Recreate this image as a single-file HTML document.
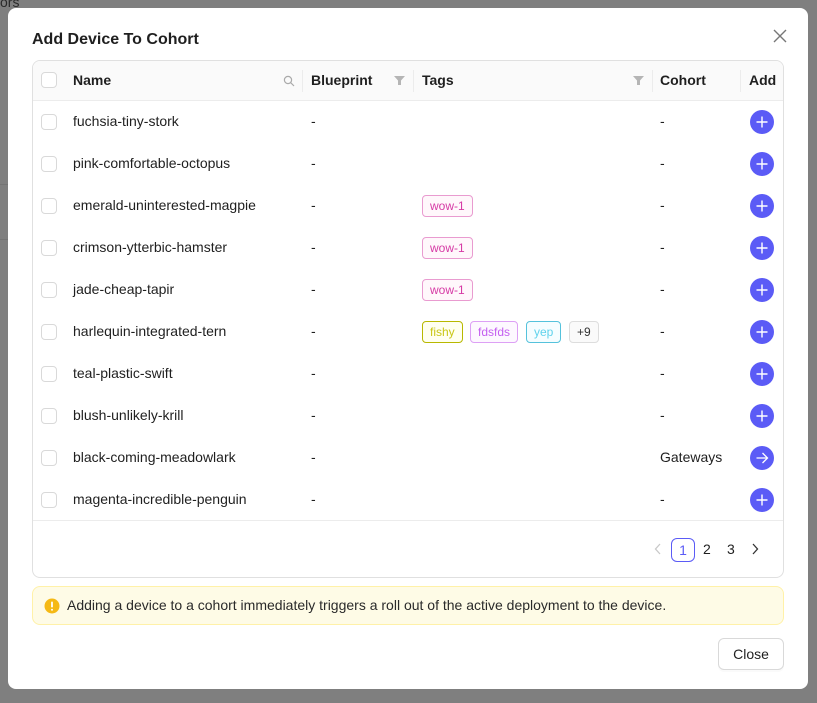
<!DOCTYPE html>
<html><head><meta charset="utf-8"><style>
*{box-sizing:border-box;margin:0;padding:0}
body{width:817px;height:703px;background:#7f7f7f;font-family:"Liberation Sans",sans-serif;font-size:14px;color:#1f1f1f;position:relative;overflow:hidden}
.bgt{position:absolute;left:0;top:-6px;color:#2a2a2a;font-size:14px}
.bgl{position:absolute;left:0;width:8px;height:1px;background:#747474}
.modal{position:absolute;left:8px;top:8px;width:800px;height:681px;background:#fff;border-radius:8px}
.title{position:absolute;left:24px;top:23px;font-size:16px;font-weight:bold;color:#1f1f1f}
.x{position:absolute;left:764px;top:20px}
.tbl{position:absolute;left:24px;top:52px;width:752px;height:518px;border:1px solid #e0e0e0;border-radius:8px;overflow:hidden}
.hd{position:absolute;left:0;top:0;width:100%;height:40px;background:#fafafa;border-bottom:1px solid #ececec}
.cb{position:absolute;width:16px;height:16px;border:1px solid #d9d9d9;border-radius:4px;background:#fff}
.th{position:absolute;top:11px;font-weight:bold;color:#1f1f1f}
.sep{position:absolute;top:9px;width:1px;height:22px;background:#ececec}
.row{position:absolute;left:0;width:100%;height:42px}
.row span{position:absolute;top:12px}
.tag{position:absolute;top:10px;height:22px;line-height:20px;padding:0 7px;border:1px solid;border-radius:4px;font-size:12px}
.add{position:absolute;left:717px;top:9px;width:24px;height:24px;border-radius:50%;background:#5b5bf6}
.pg{position:absolute;top:480px;font-size:14px}
.alert{position:absolute;left:24px;top:578px;width:752px;height:39px;background:#fefbe6;border:1px solid #fff1a8;border-radius:8px}
.btn{position:absolute;left:710px;top:630px;width:66px;height:32px;border:1px solid #d9d9d9;border-radius:6px;text-align:center;line-height:30px;box-shadow:0 2px 0 rgba(0,0,0,.02)}
</style></head><body>
<div class="bgt">ors</div>
<div class="bgl" style="top:184px"></div><div class="bgl" style="top:239px"></div>
<div class="modal">
<div class="title">Add Device To Cohort</div>
<svg class="x" width="16" height="16" viewBox="0 0 16 16"><path d="M2 2L14 14M14 2L2 14" stroke="#777" stroke-width="1.4"/></svg>
<div class="tbl">
<div class="hd">
<div class="cb" style="left:8px;top:11px"></div>
<div class="th" style="left:40px">Name</div>
<svg style="position:absolute;left:250px;top:14px" width="12" height="12" viewBox="0 0 12 12"><circle cx="5" cy="5" r="3.6" fill="none" stroke="#aaa" stroke-width="1.2"/><path d="M7.6 7.6L11 11" stroke="#aaa" stroke-width="1.2"/></svg>
<div class="sep" style="left:269px"></div>
<div class="th" style="left:278px">Blueprint</div>
<svg style="position:absolute;left:361px;top:14px" width="11" height="11" viewBox="0 0 11 11"><path d="M0 1H11L7 5.5V10H4V5.5Z" fill="#b5b5b5"/></svg>
<div class="sep" style="left:380px"></div>
<div class="th" style="left:389px">Tags</div>
<svg style="position:absolute;left:600px;top:14px" width="11" height="11" viewBox="0 0 11 11"><path d="M0 1H11L7 5.5V10H4V5.5Z" fill="#b5b5b5"/></svg>
<div class="sep" style="left:619px"></div>
<div class="th" style="left:627px">Cohort</div>
<div class="sep" style="left:707px"></div>
<div class="th" style="left:716px">Add</div>
</div>
<div id="rows"></div>
<div style="position:absolute;left:0;top:459px;width:100%;height:1px;background:#ececec"></div>
<svg style="position:absolute;left:620px;top:482px" width="10" height="12" viewBox="0 0 10 12"><path d="M7 1L2.5 6L7 11" stroke="#c8c8c8" stroke-width="1.3" fill="none"/></svg>
<div class="pg" style="left:638px;top:477px;width:24px;height:24px;border:1px solid #5b5bf6;border-radius:6px;color:#5b5bf6;text-align:center;line-height:22px">1</div>
<div class="pg" style="left:670px">2</div>
<div class="pg" style="left:694px">3</div>
<svg style="position:absolute;left:717px;top:482px" width="10" height="12" viewBox="0 0 10 12"><path d="M3 1L7.5 6L3 11" stroke="#333" stroke-width="1.3" fill="none"/></svg>
</div>
<div class="alert">
<svg style="position:absolute;left:11px;top:11px" width="16" height="16" viewBox="0 0 16 16"><circle cx="8" cy="8" r="7.5" fill="#f5b915"/><rect x="7.1" y="3.5" width="1.8" height="6" rx=".9" fill="#fff"/><circle cx="8" cy="11.8" r="1" fill="#fff"/></svg>
<span style="position:absolute;left:34px;top:10px;color:#2a2a2a">Adding a device to a cohort immediately triggers a roll out of the active deployment to the device.</span>
</div>
<div class="btn">Close</div>
</div>
<script>
var names=["fuchsia-tiny-stork","pink-comfortable-octopus","emerald-uninterested-magpie","crimson-ytterbic-hamster","jade-cheap-tapir","harlequin-integrated-tern","teal-plastic-swift","blush-unlikely-krill","black-coming-meadowlark","magenta-incredible-penguin"];
var h="";
names.forEach(function(n,i){
var t="";
if(i>=2&&i<=4)t='<div class="tag" style="left:389px;color:#d63aa5;border-color:#e99bd0;background:#fff7fb">wow-1</div>';
if(i==5)t='<div class="tag" style="left:389px;color:#c9c616;border-color:#b8b800;background:#fffff0">fishy</div><div class="tag" style="left:437px;color:#c45ef0;border-color:#dda0f5;background:#fdf8ff">fdsfds</div><div class="tag" style="left:493px;color:#5fd2ec;border-color:#55c2dc;background:#f5fdff">yep</div><div class="tag" style="left:536px;color:#333;border-color:#ddd;background:#fafafa">+9</div>';
var ic=i==8?'<path d="M6.5 12H17.5M12.5 7L17.5 12L12.5 17" stroke="#fff" stroke-width="1.3" fill="none"/>':'<path d="M12 6.5V17.5M6.5 12H17.5" stroke="#fff" stroke-width="1.4"/>';
h+='<div class="row" style="top:'+(40+i*42)+'px"><div class="cb" style="left:8px;top:13px"></div><span style="left:40px">'+n+'</span><span style="left:278px">-</span>'+t+'<span style="left:627px">'+(i==8?"Gateways":"-")+'</span><svg class="add" viewBox="0 0 24 24">'+ic+'</svg></div>';
});
document.getElementById("rows").innerHTML=h;
</script>
</body></html>
